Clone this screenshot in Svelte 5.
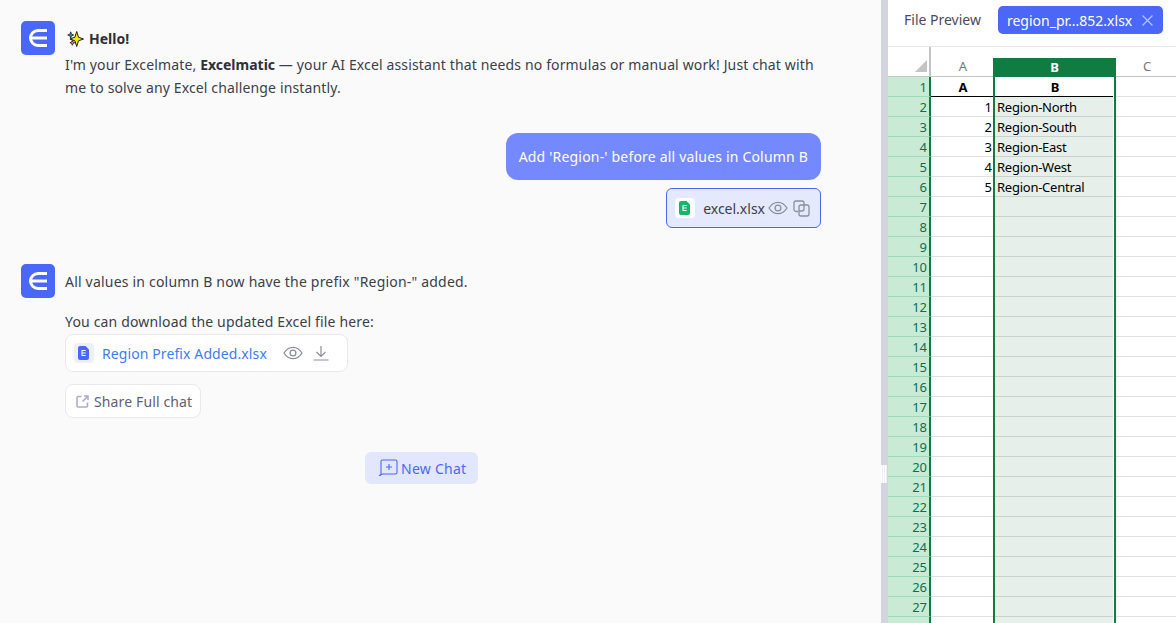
<script>
  const data = {
    1: ['A', 'B'],
    2: ['1', 'Region-North'],
    3: ['2', 'Region-South'],
    4: ['3', 'Region-East'],
    5: ['4', 'Region-West'],
    6: ['5', 'Region-Central']
  };
  const rows = Array.from({ length: 28 }, (_, i) => i + 1);
</script>

{#snippet logo()}
  <div class="avatar">
    <svg width="34" height="34" viewBox="0 0 34 34" fill="none" stroke="#fff" stroke-width="3">
      <path d="M26 9.500H17a7.500 7.500 0 0 0 0 15h9" />
      <path d="M10 17h16" />
    </svg>
  </div>
{/snippet}

{#snippet eye()}
  <svg class="eye" width="20" height="14" viewBox="0 0 20 14" fill="none" stroke="#8c8f99" stroke-width="1.300">
    <path d="M1 7c2.400-3.800 5.400-5.700 9-5.700s6.600 1.900 9 5.700c-2.400 3.800-5.400 5.700-9 5.700S3.400 10.800 1 7z" />
    <circle cx="10" cy="7" r="2.900" />
  </svg>
{/snippet}

<div class="page">
  <main class="chat">
    <section class="msg first">
      {@render logo()}
      <div class="body">
        <div class="hello">
          <svg width="18" height="18" viewBox="0 0 18 18">
            <path d="M10.700 2.500l1.800 5.700 5 1.800-5 1.800-1.800 5.700-1.800-5.700-5-1.800 5-1.800z" fill="#ffe600" stroke="#1c1c1c" stroke-width="1" />
            <path d="M4.700 2.800l.8 2.400 2.200.8-2.200.8-.8 2.400-.8-2.400-2.200-.8 2.200-.8z" fill="#1f9fc4" stroke="#1c1c1c" stroke-width=".8" />
            <path d="M6.300 11.200l.7 1.800 1.700.7-1.700.7-.7 1.900-.7-1.900-1.700-.7 1.700-.7z" fill="#f07fa8" stroke="#1c1c1c" stroke-width=".8" />
          </svg>
          <strong>Hello!</strong>
        </div>
        <p class="intro">I'm your Excelmate, <strong>Excelmatic</strong> — your AI Excel assistant that needs no formulas or manual work! Just chat with me to solve any Excel challenge instantly.</p>
      </div>
    </section>

    <section class="user">
      <div class="bubble">Add 'Region-' before all values in Column B</div>
      <div class="attach">
        <span class="fileicon white">
          <svg width="12" height="14" viewBox="0 0 12 14">
            <path d="M2 0h5.500L11 3.500V12a2 2 0 0 1-2 2H2a2 2 0 0 1-2-2V2a2 2 0 0 1 2-2z" fill="#12b76a" />
            <path d="M3.700 4.500h4M3.700 7h4M3.700 9.500h4M4 4.500v5" stroke="#fff" stroke-width="1" fill="none" />
          </svg>
        </span>
        <span class="attachname">excel.xlsx</span>
        {@render eye()}
        <svg class="copy" width="17" height="17" viewBox="0 0 17 17" fill="none" stroke="#8c8f99" stroke-width="1.300">
          <path d="M5 11.500H3a2 2 0 0 1-2-2V3a2 2 0 0 1 2-2h6a2 2 0 0 1 2 2v2" />
          <rect x="6" y="5" width="10" height="11" rx="2" />
          <path d="M11 5v4a2 2 0 0 1-2 2H6" />
        </svg>
      </div>
    </section>

    <section class="msg second">
      {@render logo()}
      <div class="body">
        <p class="line ls1">All values in column B now have the prefix "Region-" added.</p>
        <p class="line gap ls2">You can download the updated Excel file here:</p>
        <div class="filecard">
          <span class="fileicon grey">
            <svg width="12" height="14" viewBox="0 0 12 14">
              <path d="M2 0h5.500L11 3.500V12a2 2 0 0 1-2 2H2a2 2 0 0 1-2-2V2a2 2 0 0 1 2-2z" fill="#4a67f8" />
              <path d="M3.700 4.500h4M3.700 7h4M3.700 9.500h4M4 4.500v5" stroke="#fff" stroke-width="1" fill="none" />
            </svg>
          </span>
          <span class="filename">Region Prefix Added.xlsx</span>
          {@render eye()}
          <svg class="dl" width="16" height="16" viewBox="0 0 16 16" fill="none" stroke="#8c8f99" stroke-width="1.200">
            <path d="M8 1v10M3.500 7l4.500 4.500L12.500 7M.5 15h15" />
          </svg>
        </div>
        <button class="share">
          <svg width="13" height="13" viewBox="0 0 13 13" fill="none" stroke="#adafc6" stroke-width="1.600">
            <path d="M5.500 1.500H2a1 1 0 0 0-1 1V11a1 1 0 0 0 1 1h8.500a1 1 0 0 0 1-1V7.500" />
            <path d="M6.500 6.500L11.500 1.500M8 1h4v4" />
          </svg>
          Share Full chat
        </button>
      </div>
    </section>

    <div class="newwrap">
      <button class="newchat">
        <svg width="20" height="18" viewBox="0 0 20 18" fill="none" stroke="#4a67f8" stroke-width="1.100">
          <path d="M3 2.500A1.500 1.500 0 0 1 4.500 1h13A1.500 1.500 0 0 1 19 2.500v11a1.500 1.500 0 0 1-1.500 1.500H4.500L1 16.500h1.200a.8.8 0 0 0 .8-.8z" />
          <path d="M11 5v6M8 8h6" />
        </svg>
        New Chat
      </button>
    </div>
  </main>

  <div class="splitter"><span class="grip"></span></div>

  <aside class="preview">
    <header class="tabs">
      <span class="title">File Preview</span>
      <div class="tab">
        <span>region_pr...852.xlsx</span>
        <svg width="13" height="13" viewBox="0 0 13 13" fill="none" stroke="#b9c4fb" stroke-width="1.200">
          <path d="M1.500 1.500l10 10M11.500 1.500l-10 10" />
        </svg>
      </div>
    </header>

    <div class="sheet">
      <div class="colheads">
        <div class="corner"><i></i></div>
        <div class="ch a">A</div>
        <div class="ch b">B</div>
        <div class="ch c">C</div>
      </div>
      {#each rows as r}
        <div class="row">
          <div class="rh">{r}</div>
          <div class="cell a" class:num={r > 1} class:hd={r === 1}>{data[r]?.[0] ?? ''}</div>
          <div class="cell b" class:hd={r === 1}><span>{data[r]?.[1] ?? ''}</span></div>
          <div class="cell c"></div>
        </div>
      {/each}
    </div>
  </aside>
</div>

<style>
  :global(body) {
    margin: 0;
    font-family: "Noto Sans", "Open Sans", sans-serif;
    overflow: hidden;
  }
  .page {
    display: flex;
    width: 1176px;
    height: 623px;
    overflow: hidden;
    font-size: 14px;
    color: #3c3f4c;
  }
  .chat {
    width: 881px;
    flex: none;
    background: #fafafa;
    padding: 21px 60px 0 21px;
    box-sizing: border-box;
  }
  .msg {
    display: flex;
    gap: 10px;
  }
  .avatar {
    width: 34px;
    height: 34px;
    flex: none;
    border-radius: 5px;
    background: #4a67f8;
  }
  .avatar svg {
    display: block;
  }
  .body {
    flex: 1;
    min-width: 0;
  }
  p {
    margin: 0;
  }
  .hello {
    display: flex;
    align-items: center;
    gap: 5px;
    height: 18px;
    margin-top: 8px;
    color: #2e303a;
  }
  .hello svg {
    margin-left: 1px;
  }
  strong {
    font-weight: 700;
    color: #2e303a;
    letter-spacing: 0;
  }
  .intro {
    margin-top: 6px;
    line-height: 23px;
    width: 755px;
    letter-spacing: 0.14px;
  }
  .user {
    display: flex;
    flex-direction: column;
    align-items: flex-end;
    margin-top: 34px;
  }
  .bubble {
    height: 47px;
    line-height: 47px;
    padding: 0 13px;
    border-radius: 12px;
    background: #7589ff;
    color: #fff;
    letter-spacing: 0.19px;
  }
  .attach {
    display: flex;
    align-items: center;
    height: 40px;
    box-sizing: border-box;
    margin-top: 8px;
    padding: 0 10px 0 8px;
    border: 1px solid #4a67f8;
    border-radius: 6px;
    background: #e5e9fd;
  }
  .fileicon {
    display: flex;
    align-items: center;
    justify-content: center;
    width: 20px;
    height: 20px;
    border-radius: 4px;
    flex: none;
  }
  .fileicon.white {
    background: #fff;
  }
  .fileicon.grey {
    background: #eef0f8;
  }
  .attachname {
    margin: 0 3px 0 8px;
    color: #3c3f4c;
  }
  .copy {
    margin-left: 5px;
  }
  .second {
    margin-top: 36px;
  }
  .line {
    line-height: 20px;
    margin-top: 8px;
  }
  .line.gap {
    margin-top: 20px;
  }
  .ls1 {
    letter-spacing: 0.2px;
  }
  .ls2 {
    letter-spacing: 0.16px;
  }
  .filecard {
    display: flex;
    align-items: center;
    width: 283px;
    height: 38px;
    box-sizing: border-box;
    margin-top: 2px;
    padding: 0 18px 0 8px;
    background: #fff;
    border: 1px solid #e9e9ec;
    border-radius: 8px;
  }
  .filename {
    margin-left: 8px;
    color: #3f7bf8;
    letter-spacing: 0.1px;
  }
  .filecard .eye {
    margin-left: auto;
  }
  .filecard .dl {
    margin-left: 10px;
  }
  .share {
    display: flex;
    align-items: center;
    gap: 5px;
    height: 34px;
    width: 136px;
    margin-top: 12px;
    padding: 0 0 0 10px;
    background: #fff;
    border: 1px solid #e9e9ec;
    border-radius: 8px;
    font: inherit;
    letter-spacing: 0.13px;
    color: #5e6078;
  }
  .newwrap {
    display: flex;
    margin: 34px 0 0 344px;
  }
  .newchat {
    display: flex;
    align-items: center;
    gap: 3px;
    width: 113px;
    height: 32px;
    padding: 0 0 0 13px;
    box-sizing: border-box;
    border: 0;
    border-radius: 6px;
    background: #e3e7fd;
    font: inherit;
    letter-spacing: 0.25px;
    color: #4a67f8;
  }
  .splitter {
    position: relative;
    width: 7px;
    flex: none;
    background: #d3d5de;
  }
  .grip {
    position: absolute;
    top: 465px;
    left: 0;
    width: 6px;
    height: 18px;
    background: repeating-linear-gradient(90deg, #fff 0 1px, #eceef2 1px 2px);
  }
  .preview {
    flex: 1;
    min-width: 0;
    background: #fff;
    display: flex;
    flex-direction: column;
  }
  .tabs {
    height: 47px;
    flex: none;
    box-sizing: border-box;
    display: flex;
    align-items: flex-start;
    padding: 6px 13px 0 16px;
    border-bottom: 1px solid #e8e8e8;
  }
  .title {
    line-height: 28px;
    margin-right: 17px;
    color: #4a4c58;
    white-space: nowrap;
  }
  .tab {
    display: flex;
    align-items: center;
    justify-content: space-between;
    flex: 1;
    height: 28px;
    padding: 0 9px;
    border-radius: 5px;
    background: #4a67f8;
    color: #fff;
    white-space: nowrap;
  }
  .sheet {
    font-size: 13px;
    color: #000;
  }
  .colheads {
    display: flex;
    height: 30px;
  }
  .corner {
    position: relative;
    width: 41px;
    flex: none;
    border-right: 2px solid #c4c4c4;
    border-bottom: 1px solid #c4c4c4;
    height: 29px;
  }
  .corner i {
    position: absolute;
    right: 2px;
    bottom: 4px;
    width: 0;
    height: 0;
    border-style: solid;
    border-width: 0 0 12px 12px;
    border-color: transparent transparent #c4c4c4 transparent;
  }
  .ch {
    display: flex;
    align-items: flex-end;
    justify-content: center;
    box-sizing: border-box;
    height: 30px;
    line-height: 20px;
    color: #777;
    border-bottom: 1px solid #c4c4c4;
  }
  .ch.a {
    width: 62px;
    padding-left: 2px;
  }
  .ch.b {
    width: 123px;
    align-self: flex-end;
    height: 19px;
    background: #107c41;
    color: #fff;
    font-weight: 700;
    border-bottom: 0;
  }
  .ch.c {
    flex: 1;
    padding-left: 2px;
  }
  .row {
    display: flex;
    height: 20px;
    line-height: 21px;
    overflow: hidden;
  }
  .rh {
    width: 39px;
    flex: none;
    height: 19px;
    padding-right: 2px;
    text-align: right;
    background: #c9ebd5;
    color: #0f6f4a;
    border-bottom: 1px solid #9fd9b5;
    border-right: 2px solid #107c41;
  }
  .cell {
    box-sizing: border-box;
    height: 20px;
    border-bottom: 1px solid #e0e0e0;
    white-space: nowrap;
    overflow: hidden;
  }
  .cell.a {
    width: 62px;
    flex: none;
    padding-right: 1px;
  }
  .cell.num {
    text-align: right;
  }
  .cell.a.hd,
  .cell.b.hd span {
    font-weight: 700;
    text-align: center;
  }
  .cell.a.hd {
    padding-left: 2px;
    padding-right: 0;
    border-bottom-color: #000;
  }
  .cell.b {
    width: 123px;
    flex: none;
    border-left: 2px solid #107c41;
    border-right: 2px solid #107c41;
    border-bottom: 0;
    padding-right: 1px;
    background: #fff;
  }
  .cell.b span {
    display: block;
    box-sizing: border-box;
    height: 20px;
    padding-left: 2px;
    letter-spacing: -0.25px;
    background: #e6efe9;
    border-bottom: 1px solid #c9d3cc;
  }
  .cell.b.hd span {
    background: #fff;
    border-bottom-color: #000;
    letter-spacing: 0;
  }
  .cell.c {
    flex: 1;
  }
</style>
